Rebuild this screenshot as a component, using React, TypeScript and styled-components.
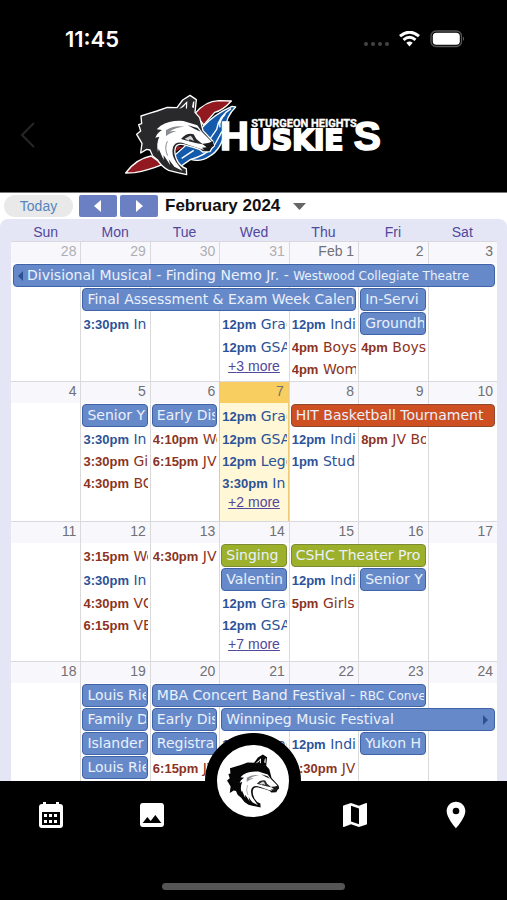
import React from "react";
import styled, { createGlobalStyle } from "styled-components";
import { MdMap, MdPhoto, MdPlace } from "react-icons/md";

const GlobalStyle = createGlobalStyle`
  * { box-sizing: border-box; }
  body { margin: 0; background: #000; }
  button { border: 0; padding: 0; background: none; font: inherit; color: inherit; cursor: pointer; }
`;

const sans = `"Liberation Sans", Arial, sans-serif`;
const wide = `Verdana, "DejaVu Sans", sans-serif`;

type Tone = "blue" | "green" | "orange" | "navy" | "red";

interface CalendarEvent {
  day: number;
  slot: number;
  tone: Tone;
  title: string;
  span?: number;
  time?: string;
  place?: string;
  fromBefore?: boolean;
  goesOn?: boolean;
}

interface WeekData {
  days: string[];
  muted?: number;
  today?: number;
  rows: ("bar" | "line")[];
  events: CalendarEvent[];
  more?: { day: number; slot: number; count: number };
}

const weekdays = ["Sun", "Mon", "Tue", "Wed", "Thu", "Fri", "Sat"];

const weeks: WeekData[] = [
  {
    days: ["28", "29", "30", "31", "Feb 1", "2", "3"],
    muted: 4,
    rows: ["bar", "bar", "bar", "line", "line"],
    events: [
      { day: 0, slot: 0, span: 7, tone: "blue", title: "Divisional Musical - Finding Nemo Jr. - ", place: "Westwood Collegiate Theatre", fromBefore: true },
      { day: 1, slot: 1, span: 4, tone: "blue", title: "Final Assessment & Exam Week Calen" },
      { day: 5, slot: 1, span: 1, tone: "blue", title: "In-Servi" },
      { day: 5, slot: 2, span: 1, tone: "blue", title: "Groundh" },
      { day: 1, slot: 2, tone: "navy", time: "3:30pm", title: "In" },
      { day: 3, slot: 2, tone: "navy", time: "12pm", title: "Grad" },
      { day: 4, slot: 2, tone: "navy", time: "12pm", title: "Indi" },
      { day: 3, slot: 3, tone: "navy", time: "12pm", title: "GSA" },
      { day: 4, slot: 3, tone: "red", time: "4pm", title: "Boys" },
      { day: 5, slot: 3, tone: "red", time: "4pm", title: "Boys" },
      { day: 4, slot: 4, tone: "red", time: "4pm", title: "Wom" },
    ],
    more: { day: 3, slot: 4, count: 3 },
  },
  {
    days: ["4", "5", "6", "7", "8", "9", "10"],
    today: 3,
    rows: ["bar", "line", "line", "line", "line"],
    events: [
      { day: 1, slot: 0, span: 1, tone: "blue", title: "Senior Y" },
      { day: 2, slot: 0, span: 1, tone: "blue", title: "Early Dis" },
      { day: 4, slot: 0, span: 3, tone: "orange", title: "HIT Basketball Tournament" },
      { day: 3, slot: 0, tone: "navy", time: "12pm", title: "Grad" },
      { day: 1, slot: 1, tone: "navy", time: "3:30pm", title: "In" },
      { day: 2, slot: 1, tone: "red", time: "4:10pm", title: "Wo" },
      { day: 3, slot: 1, tone: "navy", time: "12pm", title: "GSA" },
      { day: 4, slot: 1, tone: "navy", time: "12pm", title: "Indi" },
      { day: 5, slot: 1, tone: "red", time: "8pm", title: "JV Bo" },
      { day: 1, slot: 2, tone: "red", time: "3:30pm", title: "Gi" },
      { day: 2, slot: 2, tone: "red", time: "6:15pm", title: "JV" },
      { day: 3, slot: 2, tone: "navy", time: "12pm", title: "Lego" },
      { day: 4, slot: 2, tone: "navy", time: "1pm", title: "Stud" },
      { day: 1, slot: 3, tone: "red", time: "4:30pm", title: "BC" },
      { day: 3, slot: 3, tone: "navy", time: "3:30pm", title: "In" },
    ],
    more: { day: 3, slot: 4, count: 2 },
  },
  {
    days: ["11", "12", "13", "14", "15", "16", "17"],
    rows: ["bar", "bar", "line", "line", "line"],
    events: [
      { day: 1, slot: 0, tone: "red", time: "3:15pm", title: "Wo" },
      { day: 2, slot: 0, tone: "red", time: "4:30pm", title: "JV" },
      { day: 3, slot: 0, span: 1, tone: "green", title: "Singing" },
      { day: 4, slot: 0, span: 2, tone: "green", title: "CSHC Theater Pro" },
      { day: 1, slot: 1, tone: "navy", time: "3:30pm", title: "In" },
      { day: 3, slot: 1, span: 1, tone: "blue", title: "Valentin" },
      { day: 4, slot: 1, tone: "navy", time: "12pm", title: "Indi" },
      { day: 5, slot: 1, span: 1, tone: "blue", title: "Senior Y" },
      { day: 1, slot: 2, tone: "red", time: "4:30pm", title: "VC" },
      { day: 3, slot: 2, tone: "navy", time: "12pm", title: "Grad" },
      { day: 4, slot: 2, tone: "red", time: "5pm", title: "Girls" },
      { day: 1, slot: 3, tone: "red", time: "6:15pm", title: "VB" },
      { day: 3, slot: 3, tone: "navy", time: "12pm", title: "GSA" },
    ],
    more: { day: 3, slot: 4, count: 7 },
  },
  {
    days: ["18", "19", "20", "21", "22", "23", "24"],
    rows: ["bar", "bar", "bar", "bar", "line"],
    events: [
      { day: 1, slot: 0, span: 1, tone: "blue", title: "Louis Rie" },
      { day: 2, slot: 0, span: 4, tone: "blue", title: "MBA Concert Band Festival - ", place: "RBC Conve" },
      { day: 1, slot: 1, span: 1, tone: "blue", title: "Family D" },
      { day: 2, slot: 1, span: 1, tone: "blue", title: "Early Dis" },
      { day: 3, slot: 1, span: 4, tone: "blue", title: "Winnipeg Music Festival", goesOn: true },
      { day: 1, slot: 2, span: 1, tone: "blue", title: "Islander" },
      { day: 2, slot: 2, span: 1, tone: "blue", title: "Registra" },
      { day: 3, slot: 2, tone: "navy", time: "12pm", title: "Grad" },
      { day: 4, slot: 2, tone: "navy", time: "12pm", title: "Indi" },
      { day: 5, slot: 2, span: 1, tone: "blue", title: "Yukon H" },
      { day: 1, slot: 3, span: 1, tone: "blue", title: "Louis Rie" },
      { day: 2, slot: 3, tone: "red", time: "6:15pm", title: "JV" },
      { day: 4, slot: 3, tone: "red", time: "6:30pm", title: "JV" },
    ],
  },
];

const fills: Record<Tone, string> = {
  blue: "#668ac9",
  green: "#9db02b",
  orange: "#cd4f22",
  navy: "#2c5297",
  red: "#8b3322",
};
const edges: Record<Tone, string> = {
  blue: "#3f63a6",
  green: "#7b8b34",
  orange: "#8f472d",
  navy: "#2c5297",
  red: "#8b3322",
};

const Screen = styled.div`
  height: 100vh;
  display: flex;
  flex-direction: column;
  background: #000;
  font-family: ${sans};
  overflow: hidden;
`;

const StatusBar = styled.div`
  display: flex;
  align-items: center;
  justify-content: space-between;
  height: 78px;
  flex: none;
  padding: 0 42px 0 65px;
  color: #fff;
`;
const Clock = styled.time`
  font: 600 22px/24px Inter, sans-serif;
`;
const StatusIcons = styled.div`
  display: flex;
  align-items: center;
  gap: 10px;
`;

const Header = styled.header`
  display: grid;
  grid-template-columns: 56px 1fr 56px;
  align-items: center;
  height: 114px;
  flex: none;
`;
const BackButton = styled.button`
  display: flex;
  justify-content: center;
`;
const LogoSlot = styled.div`
  display: flex;
  justify-content: center;
`;

const Calendar = styled.main`
  flex: 1;
  min-height: 0;
  overflow: hidden;
  background: #fff;
  border-top: 1px solid #777;
`;
const Toolbar = styled.div`
  display: flex;
  align-items: center;
  height: 26px;
  padding-left: 4px;
`;
const TodayButton = styled.button`
  width: 69px;
  height: 22px;
  margin-right: 6px;
  border-radius: 11px;
  background: #e9e9ea;
  color: #5585bd;
  font-size: 14px;
`;
const StepButton = styled.button`
  display: flex;
  align-items: center;
  justify-content: center;
  width: 38px;
  height: 22px;
  margin-right: 3px;
  border-radius: 2px;
  background: #6b7fc3;
`;
const MonthButton = styled.button`
  display: flex;
  align-items: center;
  gap: 13px;
  margin-left: 4px;
  color: #111;
  font-size: 17px;
  font-weight: bold;
`;

const Frame = styled.div`
  padding: 0 10px 0 11px;
  border-radius: 8px 8px 0 0;
  background: #e4e6f5;
`;
const Weekdays = styled.div`
  display: grid;
  grid-template-columns: repeat(7, 1fr);
  height: 22px;
  line-height: 26px;
  text-align: center;
  font-size: 14px;
  color: #51489c;
`;

const rowHeights = { bar: "24px", line: "22px" };
const Week = styled.section<{ $rows: ("bar" | "line")[] }>`
  display: grid;
  grid-template-columns: repeat(7, minmax(0, 1fr));
  grid-template-rows: 23px ${(p) => p.$rows.map((r) => rowHeights[r]).join(" ")} 1fr;
  min-height: 140px;
  background: #fff;
`;
const Day = styled.div<{ $col: number; $today: boolean }>`
  grid-column: ${(p) => p.$col + 1};
  grid-row: 1 / -1;
  border-top: 1px solid #d9d9dd;
  border-left: ${(p) => (p.$col === 0 ? "0" : `1px solid ${p.$today ? "#eccb74" : "#dadadd"}`)};
  border-right: ${(p) => (p.$today ? "1px solid #eccb74" : "0")};
  background: ${(p) => (p.$today ? "#fff7d5" : "#fff")};
`;
const DayNumber = styled.div<{ $muted: boolean; $today: boolean }>`
  height: 21px;
  padding-right: 4px;
  line-height: 19px;
  text-align: right;
  font-size: 14px;
  color: ${(p) => (p.$muted ? "#aeaeb2" : "#707075")};
  background: ${(p) => (p.$today ? "#f8ce60" : "#f8f8fc")};
`;

interface Place {
  $col: number;
  $slot: number;
  $span?: number;
}
const Bar = styled.button<Place & { $tone: Tone }>`
  grid-column: ${(p) => p.$col + 1} / span ${(p) => p.$span};
  grid-row: ${(p) => p.$slot + 2};
  display: flex;
  align-items: center;
  height: 23px;
  margin: 0 2px;
  padding: 0 1px 0 4px;
  border: 1px solid ${(p) => edges[p.$tone]};
  border-radius: 4px;
  background: ${(p) => fills[p.$tone]};
  color: #eaf0fc;
  font: 14px/21px ${wide};
`;
const BarText = styled.span`
  flex: 1;
  overflow: hidden;
  white-space: pre;
  text-align: left;
`;
const Location = styled.small`
  font-size: 12px;
`;
const Timed = styled.button<Place & { $tone: Tone }>`
  grid-column: ${(p) => p.$col + 1};
  grid-row: ${(p) => p.$slot + 2};
  align-self: center;
  margin: 0 2px 0 3px;
  overflow: hidden;
  white-space: nowrap;
  text-align: left;
  color: ${(p) => fills[p.$tone]};
  font: 14px/20px ${wide};
`;
const Time = styled.b`
  font-family: ${sans};
  font-size: 13px;
`;
const More = styled.a<Place>`
  grid-column: ${(p) => p.$col + 1};
  grid-row: ${(p) => p.$slot + 2};
  align-self: start;
  justify-self: center;
  font-size: 14px;
  line-height: 16px;
  color: #51489c;
`;

const Footer = styled.footer`
  position: relative;
  flex: none;
  height: 119px;
  display: flex;
  flex-direction: column;
  align-items: center;
  justify-content: space-between;
  padding-bottom: 10px;
  background: #000;
`;
const Nav = styled.nav`
  display: grid;
  grid-template-columns: repeat(5, 1fr);
  justify-items: center;
  align-items: start;
  width: 100%;
  height: 68px;
`;
const NavButton = styled.button`
  display: flex;
  margin-top: 18px;
  color: #fff;
  font-size: 32px;
`;
const HomeButton = styled.button`
  display: flex;
  width: 96px;
  height: 96px;
  margin-top: -48px;
  border: 12px solid #000;
  border-radius: 50%;
  background: #fff;
`;
const HomeIndicator = styled.div`
  width: 36%;
  height: 7px;
  border-radius: 4px;
  background: #555;
`;

const Triangle = ({ d, fill, w, h }: { d: string; fill: string; w: number; h: number }) => (
  <svg width={w} height={h} viewBox={`0 0 ${w} ${h}`} aria-hidden="true">
    <path d={d} fill={fill} />
  </svg>
);

const headOutline =
  "M568 286L587 299L583 337L597 353Q603 376 607 392L636 423L641 437L634 444L628 455L606 456L598 449L578 442L548 434Q528 430 524 444Q519 461 531 484Q540 500 557 506L558 524Q530 518 504 511Q481 499 470 479L456 468L448 450L438 448L420 459L424 430L408 403L420 393L414 374L423 371L421 348L443 341L469 333L500 322L529 323L546 300Z";
const faceShape =
  "M480 377Q508 360 548 363L590 376L604 396L633 425L624 440L609 449L594 445L553 431Q526 421 517 441Q511 464 526 486L546 513L521 500L504 478L509 496L489 466L489 480L474 446L472 456Q466 430 476 410L464 413Q470 398 484 390L468 388Z";

const WolfDetails = () => (
  <g>
    <path d="M535 327L560 303L559 327L550 320Z" fill="#fff" />
    <path d="M545 325L556 311L555 327Z" fill="#222" />
    <path d="M574 322L577 306L581 303L580 324Z" fill="#fff" />
    <path d={faceShape} fill="#fff" />
    <path d="M496 391Q520 374 552 380Q524 382 506 395Q516 391 528 394Q508 398 496 409Z" fill="#8a8b90" />
    <path d="M560 375L590 384L600 395L582 387Z" fill="#202024" />
    <path d="M541 417Q558 397 579 403L587 417L606 433L588 430L570 425Z" fill="#29292c" />
    <path d="M552 416L569 407L574 411L580 423L567 418L564 422Z" fill="#d5d5d8" />
    <path d="M604 431Q621 432 637 424L640 437L631 443L626 453L611 451L604 443L618 442Z" fill="#19191b" />
    <path d="M500 424Q490 445 501 467" fill="none" stroke="#8a8b90" strokeWidth="3" />
  </g>
);

const HuskiesLogo = () => (
  <svg width="260" height="84" viewBox="370 279 780 252" role="img" aria-label="Sturgeon Heights Huskies">
    <g stroke="#fff" strokeWidth="4" strokeLinejoin="round">
      <path d="M583 341Q614 303 654 302L692 303Q667 331 642 337L609 375Z" fill="#91191f" />
      <path d="M375 519Q405 477 451 468L487 493Q442 511 402 518Z" fill="#91191f" />
      <path d="M608 379Q642 342 694 319L705 321Q675 350 674 390Q662 450 626 469Q600 487 570 478L533 504Q505 507 487 493Q550 448 608 379Z" fill="#145aaa" />
      <path d="M691 326Q654 349 648 388L627 418M674 342Q653 364 658 382M664 394L640 438Q615 466 571 478M579 451L543 475" fill="none" strokeWidth="4" />
      <path d="M528 438L548 440L526 454Z" fill="#a01e25" stroke="none" />
    </g>
    <path d={headOutline} fill="#29292c" stroke="#fff" strokeWidth="4" strokeLinejoin="round" />
    <WolfDetails />
    <g fill="#fff" stroke="#fff" strokeWidth="5" fontWeight="bold" fontFamily='"Liberation Sans", Arial, sans-serif'>
      <text x="658" y="449" fontSize="120">H</text>
      <text x="752" y="380" fontSize="33" strokeWidth="1" fontFamily="Roboto, sans-serif">STURGEON HEIGHTS</text>
      <text x="746" y="449" fontSize="84" strokeWidth="6" fontFamily='"DejaVu Sans", sans-serif'>USKIE</text>
      <text x="1059" y="449" fontSize="122">S</text>
    </g>
  </svg>
);

const Event = ({ event: e }: { event: CalendarEvent }) =>
  e.time ? (
    <Timed $col={e.day} $slot={e.slot} $tone={e.tone}>
      <Time>{e.time}</Time> {e.title}
    </Timed>
  ) : (
    <Bar $col={e.day} $slot={e.slot} $span={e.span} $tone={e.tone}>
      {e.fromBefore && <Triangle w={9} h={10} d="M5 0V10L0 5Z" fill="#2c4f96" />}
      <BarText>
        {e.title}
        {e.place && <Location>{e.place}</Location>}
      </BarText>
      {e.goesOn && <Triangle w={10} h={10} d="M0 0V10L5 5Z" fill="#2c4f96" />}
    </Bar>
  );

export default function App() {
  return (
    <Screen>
      <GlobalStyle />
      <StatusBar>
        <Clock>11:45</Clock>
        <StatusIcons>
          <svg width="26" height="18" viewBox="0 0 26 18" fill="#444" aria-hidden="true">
            <circle cx="3" cy="14" r="2" />
            <circle cx="10" cy="14" r="2" />
            <circle cx="17" cy="14" r="2" />
            <circle cx="24" cy="14" r="2" />
          </svg>
          <svg width="21" height="16" viewBox="0 0 21 16" aria-label="Wi-Fi" role="img">
            <g fill="none" stroke="#fff" strokeWidth="3">
              <path d="M1 5.2Q10.500 -2.800 20 5.200" />
              <path d="M4.500 8.900Q10.500 3.700 16.500 8.900" />
            </g>
            <path d="M7.300 11.800Q10.500 9 13.700 11.800L10.500 15.600Z" fill="#fff" />
          </svg>
          <svg width="35" height="18" viewBox="0 0 35 18" aria-label="Battery" role="img">
            <rect x="1" y="1" width="30.500" height="15.500" rx="5" fill="none" stroke="#555" strokeWidth="1.300" />
            <rect x="2.800" y="2.800" width="27" height="12" rx="3.500" fill="#fff" />
            <path d="M33 6.500Q35 8.700 33 11Z" fill="#666" />
          </svg>
        </StatusIcons>
      </StatusBar>
      <Header>
        <BackButton aria-label="Back">
          <svg width="16" height="26" viewBox="0 0 16 26" fill="none" stroke="#262626" strokeWidth="2">
            <path d="M14 1L2 13L14 25" />
          </svg>
        </BackButton>
        <LogoSlot>
          <HuskiesLogo />
        </LogoSlot>
      </Header>
      <Calendar>
        <Toolbar>
          <TodayButton>Today</TodayButton>
          <StepButton aria-label="Previous month">
            <Triangle w={8} h={12} d="M7 0V12L0 6Z" fill="#fff" />
          </StepButton>
          <StepButton aria-label="Next month">
            <Triangle w={8} h={12} d="M1 0V12L8 6Z" fill="#fff" />
          </StepButton>
          <MonthButton>
            February 2024
            <Triangle w={13} h={7} d="M0 0H13L6.500 7Z" fill="#666" />
          </MonthButton>
        </Toolbar>
        <Frame>
          <Weekdays>
            {weekdays.map((d) => (
              <span key={d}>{d}</span>
            ))}
          </Weekdays>
          {weeks.map((w) => (
            <Week key={w.days[0]} $rows={w.rows}>
              {w.days.map((d, i) => (
                <Day key={d} $col={i} $today={w.today === i}>
                  <DayNumber $muted={i < (w.muted ?? 0)} $today={w.today === i}>
                    {d}
                  </DayNumber>
                </Day>
              ))}
              {w.events.map((e) => (
                <Event key={`${e.day}-${e.slot}`} event={e} />
              ))}
              {w.more && (
                <More href="#" $col={w.more.day} $slot={w.more.slot}>
                  +{w.more.count} more
                </More>
              )}
            </Week>
          ))}
        </Frame>
      </Calendar>
      <Footer>
        <Nav aria-label="Main">
          <NavButton aria-label="Calendar">
            <svg width="32" height="32" viewBox="0 0 32 32">
              <path d="M8 3h3v2h10V3h3v2h1q3 0 3 3v18q0 3-3 3H7q-3 0-3-3V8q0-3 3-3h1z" fill="#fff" />
              <path d="M7 13h18v13H7z" fill="#000" />
              <path d="M9 15h3v3H9zm5 0h3v3h-3zm5 0h3v3h-3zM9 21h3v3H9zm5 0h3v3h-3zm5 0h3v3h-3z" fill="#fff" />
            </svg>
          </NavButton>
          <NavButton aria-label="Photos">
            <MdPhoto />
          </NavButton>
          <HomeButton aria-label="Home">
            <svg width="72" height="72" viewBox="363 244 322 322">
              <path d={headOutline} fill="#050505" />
              <WolfDetails />
            </svg>
          </HomeButton>
          <NavButton aria-label="Map">
            <MdMap />
          </NavButton>
          <NavButton aria-label="Location">
            <MdPlace />
          </NavButton>
        </Nav>
        <HomeIndicator />
      </Footer>
    </Screen>
  );
}
